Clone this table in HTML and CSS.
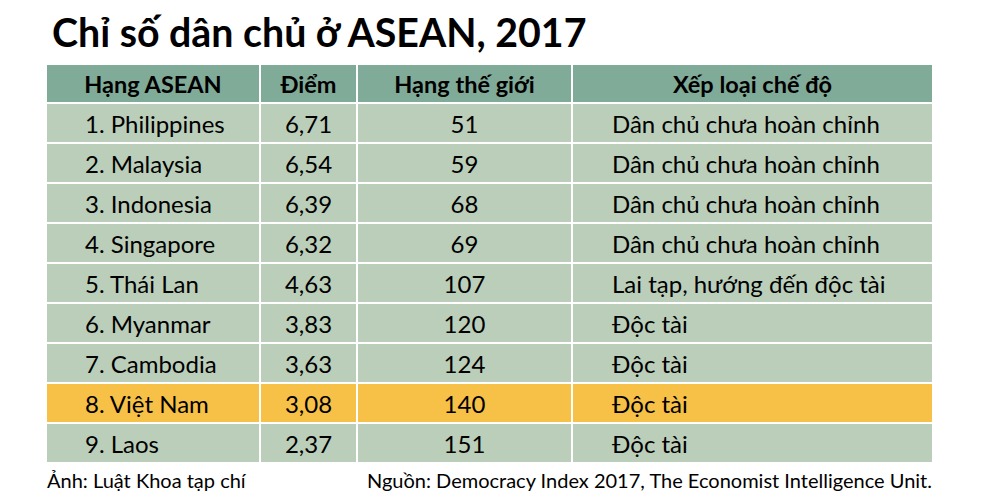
FILE: index.html
```html
<!DOCTYPE html>
<html lang="vi">
<head>
<meta charset="utf-8">
<title>Chỉ số dân chủ ở ASEAN, 2017</title>
<link rel="stylesheet" href="styles.css">
</head>
<body>
<div class="page">
  <h1 class="title">Chỉ số dân chủ ở ASEAN, 2017</h1>
  <table class="grid">
    <colgroup>
      <col class="c1"><col class="c2"><col class="c3"><col class="c4">
    </colgroup>
    <thead>
      <tr><th>Hạng ASEAN</th><th>Điểm</th><th>Hạng thế giới</th><th>Xếp loại chế độ</th></tr>
    </thead>
    <tbody>
      <tr><td class="name">1. Philippines</td><td class="num">6,71</td><td class="num">51</td><td class="kind">Dân chủ chưa hoàn chỉnh</td></tr>
      <tr><td class="name">2. Malaysia</td><td class="num">6,54</td><td class="num">59</td><td class="kind">Dân chủ chưa hoàn chỉnh</td></tr>
      <tr><td class="name">3. Indonesia</td><td class="num">6,39</td><td class="num">68</td><td class="kind">Dân chủ chưa hoàn chỉnh</td></tr>
      <tr><td class="name">4. Singapore</td><td class="num">6,32</td><td class="num">69</td><td class="kind">Dân chủ chưa hoàn chỉnh</td></tr>
      <tr><td class="name">5. Thái Lan</td><td class="num">4,63</td><td class="num">107</td><td class="kind">Lai tạp, hướng đến độc tài</td></tr>
      <tr><td class="name">6. Myanmar</td><td class="num">3,83</td><td class="num">120</td><td class="kind">Độc tài</td></tr>
      <tr><td class="name">7. Cambodia</td><td class="num">3,63</td><td class="num">124</td><td class="kind">Độc tài</td></tr>
      <tr class="hl"><td class="name">8. Việt Nam</td><td class="num">3,08</td><td class="num">140</td><td class="kind">Độc tài</td></tr>
      <tr><td class="name">9. Laos</td><td class="num">2,37</td><td class="num">151</td><td class="kind">Độc tài</td></tr>
    </tbody>
  </table>
  <div class="foot">
    <span>Ảnh: Luật Khoa tạp chí</span>
    <span>Nguồn: Democracy Index 2017, The Economist Intelligence Unit.</span>
  </div>
</div>
</body>
</html>
```

FILE: styles.css
```css
html, body {
  margin: 0;
  padding: 0;
  background: #ffffff;
}
body {
  font-family: Lato, "Noto Sans", sans-serif;
  color: #000000;
}
.page {
  width: 981px;
  height: 503px;
  display: flex;
  flex-direction: column;
}
.title {
  margin: 0;
  height: 65px;
  padding-left: 52px;
  box-sizing: border-box;
  font-size: 39.3px;
  font-weight: 700;
  line-height: 64px;
  letter-spacing: 0;
}
.grid {
  margin-left: 47px;
  width: 885px;
  border-collapse: collapse;
  table-layout: fixed;
}
.c1 { width: 213px; }
.c2 { width: 97px; }
.c3 { width: 215px; }
.c4 { width: 360px; }
.grid th, .grid td {
  border: 2px solid #ffffff;
  padding: 0;
  font-size: 24px;
  white-space: nowrap;
}
.grid tr > :first-child { border-left: 0; }
.grid tr > :last-child { border-right: 0; }
.grid thead th { border-top: 0; }
.grid tbody tr:last-child td { border-bottom: 0; }
.grid th {
  background: #80ab98;
  height: 37px;
  font-weight: 700;
  font-size: 23.5px;
  text-align: center;
}
.grid td {
  background: #bbceb9;
  height: 38px;
}
.grid .hl td { background: #f7c046; }
.grid .name { padding-left: 38px; text-align: left; }
.grid .num { text-align: center; }
.grid .kind { padding-left: 39px; text-align: left; }
.foot {
  margin-left: 47px;
  width: 885px;
  display: flex;
  justify-content: space-between;
  font-size: 20px;
  line-height: 28px;
  padding-top: 4px;
}
```
